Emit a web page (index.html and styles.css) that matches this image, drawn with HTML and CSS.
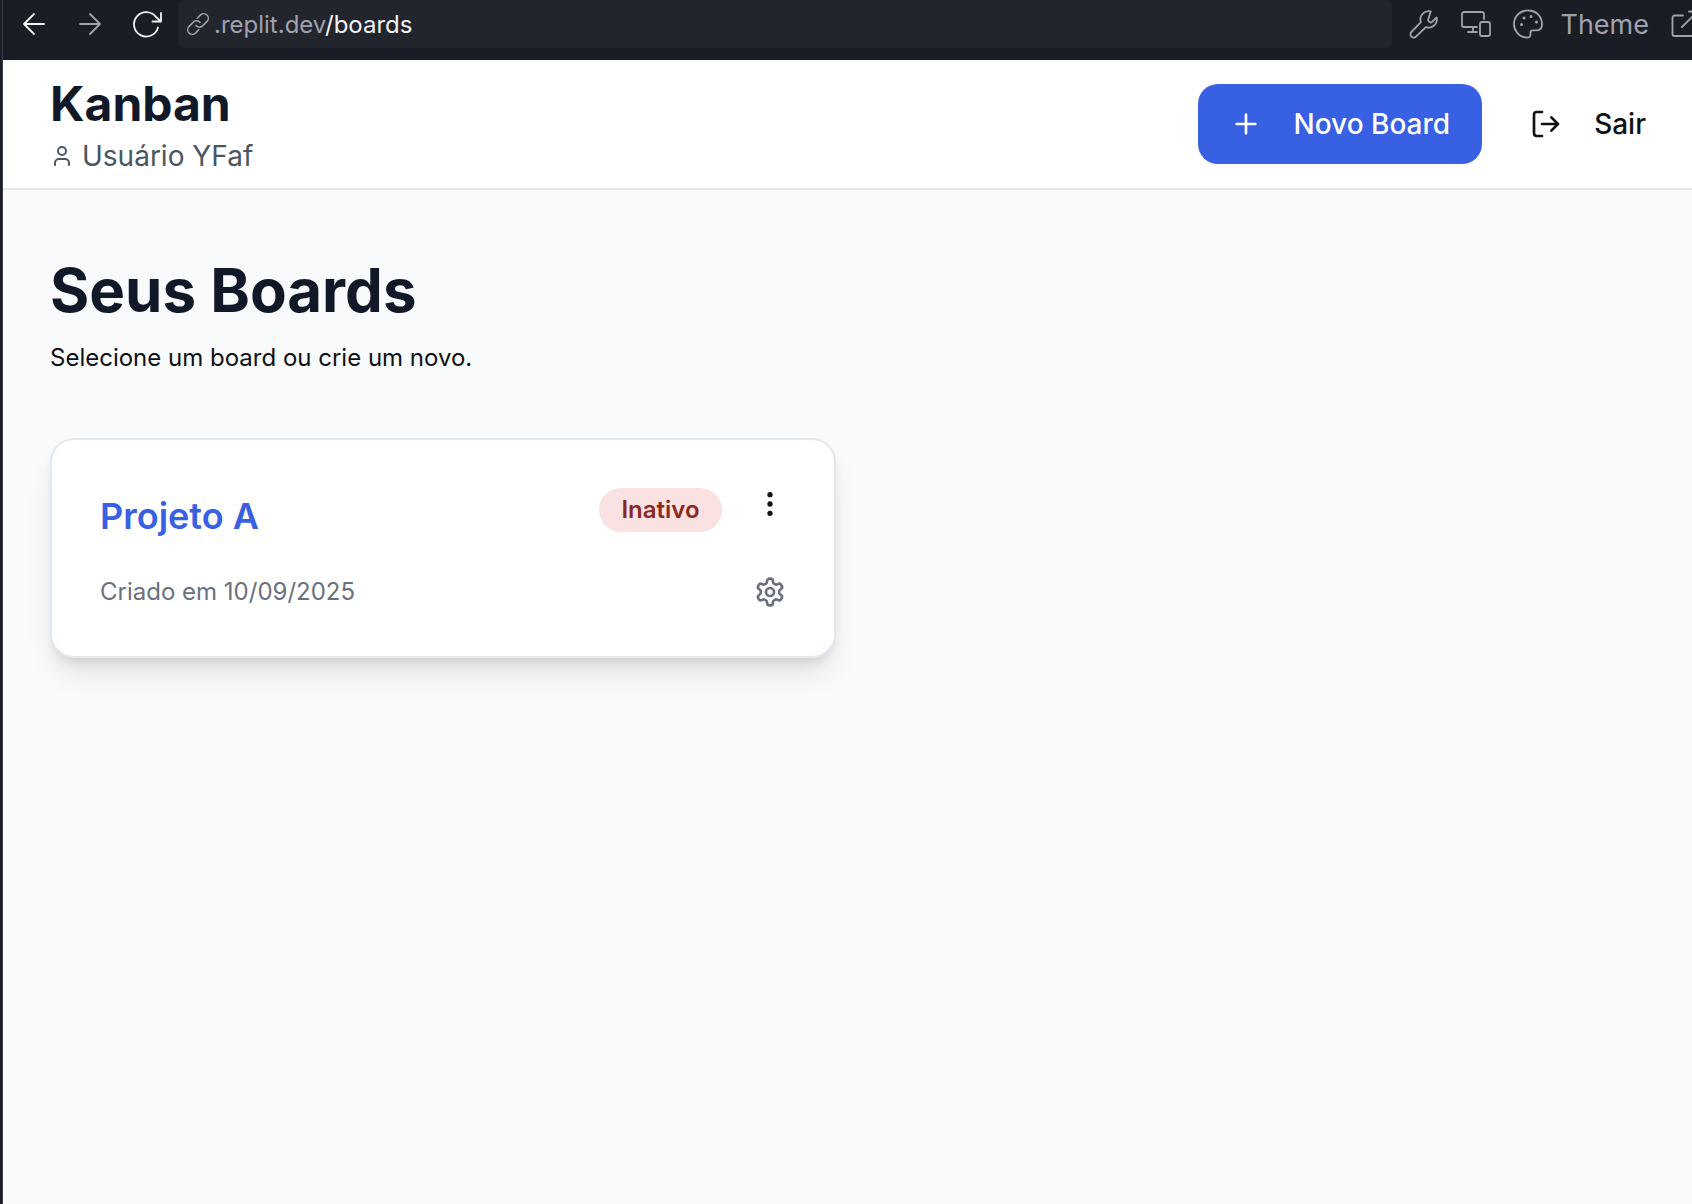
FILE: index.html
```html
<!DOCTYPE html>
<html lang="pt-BR">
<head>
<meta charset="utf-8">
<meta name="viewport" content="width=device-width, initial-scale=1">
<title>Kanban</title>
<link rel="stylesheet" href="styles.css">
</head>
<body>
<nav class="toolbar" aria-label="Preview">
  <div class="history">
    <button class="tool tool-strong" aria-label="Back"><svg class="icon" viewBox="0 0 32 32"><path d="M26 16H6M16 6L6 16l10 10"/></svg></button>
    <button class="tool" aria-label="Forward"><svg class="icon" viewBox="0 0 32 32"><path d="M6 16h20M16 6l10 10-10 10"/></svg></button>
    <button class="tool tool-strong" aria-label="Reload"><svg class="icon" viewBox="0 0 32 32"><path d="M28 19.5A12.200 12.200 0 1 1 26 9l4.500 4M31 5v8.500h-8.500"/></svg></button>
  </div>
  <button class="address">
    <svg class="icon icon-link" viewBox="0 0 24 24"><path d="M10 13.500a4.500 4.500 0 0 0 6.600.400l4.500-4.500a4.600 4.600 0 0 0-6.500-6.500l-3.400 3.400"/><path d="M14 10.500a4.500 4.500 0 0 0-6.600-.400l-4.500 4.500a4.600 4.600 0 0 0 6.500 6.500l3.400-3.400"/></svg>
    <span class="url">.replit.dev<span class="url-path">/boards</span></span>
  </button>
  <div class="tools">
    <button class="tool" aria-label="Developer tools"><svg class="icon" viewBox="0 0 32 32"><path d="M20.500 10.500c-.700.900-.600 1.700 0 2.300l1.200 1.200c.700.600 1.500.700 2.300 0l4.700-4.500a8.300 8.300 0 0 1-10.900 9.600L8 28.600a3.200 3.200 0 0 1-4.600-4.600l9.500-9.800a8.300 8.300 0 0 1 9.900-10.800z"/></svg></button>
    <button class="tool" aria-label="Devices"><svg class="icon" viewBox="0 0 32 32"><path d="M24 11V6a2 2 0 0 0-2-2H4a2 2 0 0 0-2 2v11a2 2 0 0 0 2 2h13M13 19v5M8 24h9"/><rect x="20" y="14" width="10" height="14" rx="2"/></svg></button>
    <button class="tool tool-theme"><svg class="icon" viewBox="0 0 32 32"><path d="M16.500 2.500a13.500 13.500 0 0 0-2 27c2.500.300 4-.800 4-3v-2c0-1.500.800-2.200 2.200-2.200H25c3 0 5-2.300 5-6C30 8.300 24 2.500 16.500 2.500z"/><path class="dots" d="M9.500 16.500h.01M12 10h.01M19 8.500h.01M24.500 14h.01"/></svg>Theme</button>
    <button class="tool tool-edge" aria-label="Open in new tab"><svg class="icon" viewBox="0 0 32 32"><path d="M14 7.500H5.500a2 2 0 0 0-2 2V26a2 2 0 0 0 2 2H22a2 2 0 0 0 2-2v-8M13 19L28.500 3.500M20 3.500h8.500V12"/></svg></button>
  </div>
</nav>
<div class="app">
  <header class="header">
    <div>
      <h1 class="brand">Kanban</h1>
      <p class="user"><svg class="icon icon-bold icon-small" viewBox="0 0 24 24"><path d="M19 21v-2a4 4 0 0 0-4-4H9a4 4 0 0 0-4 4v2"/><circle cx="12" cy="7" r="4"/></svg>Usuário YFaf</p>
    </div>
    <div class="actions">
      <button class="button button-primary"><svg class="icon icon-bold" viewBox="0 0 24 24"><path d="M5 12h14M12 5v14"/></svg>Novo Board</button>
      <button class="button"><svg class="icon icon-bold" viewBox="0 0 24 24"><path d="M9 21H5a2 2 0 0 1-2-2V5a2 2 0 0 1 2-2h4M16 17l5-5-5-5M21 12H9"/></svg>Sair</button>
    </div>
  </header>
  <main class="main">
    <h2 class="heading">Seus Boards</h2>
    <p class="lead">Selecione um board ou crie um novo.</p>
    <div class="boards">
      <article class="card">
        <div class="card-top">
          <h3 class="card-title"><a class="card-link" href="#projeto-a">Projeto A</a></h3>
          <div class="card-side">
            <span class="badge">Inativo</span>
            <button class="icon-button" aria-label="Mais opções"><svg class="icon icon-bold icon-filled" viewBox="0 0 24 24"><circle cx="12" cy="12" r="1"/><circle cx="12" cy="5" r="1"/><circle cx="12" cy="19" r="1"/></svg></button>
          </div>
        </div>
        <div class="card-bottom">
          <p class="card-date">Criado em 10/09/2025</p>
          <button class="icon-button icon-muted" aria-label="Configurações"><svg class="icon icon-bold" viewBox="0 0 24 24"><path d="M12.220 2h-.440a2 2 0 0 0-2 2v.180a2 2 0 0 1-1 1.730l-.430.250a2 2 0 0 1-2 0l-.150-.080a2 2 0 0 0-2.730.730l-.220.380a2 2 0 0 0 .730 2.730l.150.100a2 2 0 0 1 1 1.720v.510a2 2 0 0 1-1 1.740l-.150.090a2 2 0 0 0-.730 2.730l.220.380a2 2 0 0 0 2.730.730l.150-.080a2 2 0 0 1 2 0l.430.250a2 2 0 0 1 1 1.730V20a2 2 0 0 0 2 2h.440a2 2 0 0 0 2-2v-.180a2 2 0 0 1 1-1.730l.430-.250a2 2 0 0 1 2 0l.150.080a2 2 0 0 0 2.730-.730l.220-.390a2 2 0 0 0-.730-2.730l-.150-.080a2 2 0 0 1-1-1.740v-.500a2 2 0 0 1 1-1.740l.150-.090a2 2 0 0 0 .730-2.730l-.220-.380a2 2 0 0 0-2.730-.730l-.150.080a2 2 0 0 1-2 0l-.430-.250a2 2 0 0 1-1-1.730V4a2 2 0 0 0-2-2z"/><circle cx="12" cy="12" r="3"/></svg></button>
        </div>
      </article>
    </div>
  </main>
</div>
</body>
</html>
```
FILE: styles.css
```css
* {
  box-sizing: border-box;
}

body {
  margin: 0;
  min-height: 100vh;
  display: flex;
  flex-direction: column;
  background: #1a1d25;
  color: #0f1115;
  font-family: Inter, "Liberation Sans", sans-serif;
}

h1, h2, h3, p {
  margin: 0;
}

button {
  margin: 0;
  padding: 0;
  border: 0;
  background: none;
  color: inherit;
  font: inherit;
  cursor: pointer;
}

.icon {
  display: block;
  flex: none;
  width: 32px;
  height: 32px;
  fill: none;
  stroke: currentColor;
  stroke-width: 1.8;
  stroke-linecap: round;
  stroke-linejoin: round;
}

.icon-bold {
  stroke-width: 2;
}

.icon-small {
  width: 24px;
  height: 24px;
}

.icon-filled {
  fill: currentColor;
}

.toolbar {
  display: flex;
  align-items: flex-start;
  gap: 16px;
  height: 60px;
  padding-left: 15px;
  border-left: 1px solid #3a3d47;
  margin-left: 2px;
  overflow: hidden;
  color: #a0a3ae;
}

.history,
.tools {
  display: flex;
  align-items: center;
  height: 48px;
}

.history {
  gap: 24px;
}

.tools {
  flex: none;
  gap: 20px;
}

.tool {
  display: flex;
  align-items: center;
}

.tool-strong {
  color: #f2f3f5;
}

.tool-theme {
  gap: 16px;
  font-size: 27px;
}

.tool-edge {
  width: 23px;
  overflow: hidden;
}

.address {
  display: flex;
  flex: 1;
  align-items: center;
  gap: 4px;
  height: 48px;
  padding: 0 8px;
  border-radius: 8px;
  background: #22252e;
  font-size: 24px;
  text-align: left;
}

.icon-link {
  width: 24px;
  height: 24px;
  stroke-width: 1.5;
}

.url-path {
  color: #f2f3f5;
}

.dots {
  stroke-width: 3;
}

.app {
  flex: 1;
  border-left: 1px solid #3a3d47;
  margin-left: 2px;
  background: #f9fafc;
}

.header {
  display: flex;
  align-items: center;
  justify-content: space-between;
  padding: 12px 14px 12px 47px;
  border-bottom: 2px solid #e4e6ea;
  background: #ffffff;
}

.brand {
  color: #111827;
  font-size: 48px;
  font-weight: 700;
  line-height: 64px;
}

.user {
  display: flex;
  align-items: center;
  gap: 8px;
  color: #4b5563;
  font-size: 28px;
  line-height: 40px;
}

.actions {
  display: flex;
  gap: 16px;
}

.button {
  display: flex;
  align-items: center;
  gap: 32px;
  height: 80px;
  padding: 0 32px;
  border-radius: 20px;
  font-size: 28px;
  font-weight: 500;
}

.button-primary {
  background: #3860e2;
  color: #ffffff;
}

.main {
  padding: 64px 23px 64px 47px;
}

.heading {
  color: #111827;
  font-size: 60px;
  font-weight: 700;
  line-height: 72px;
}

.lead {
  margin-top: 16px;
  font-size: 24px;
  line-height: 32px;
}

.boards {
  display: grid;
  grid-template-columns: repeat(2, minmax(0, 1fr));
  gap: 48px;
  margin-top: 64px;
}

.card {
  padding: 48px;
  border: 2px solid #e1e8ee;
  border-radius: 24px;
  background: #ffffff;
  box-shadow: 0 20px 30px -6px rgb(0 0 0 / 10%), 0 8px 12px -4px rgb(0 0 0 / 10%);
}

.card-top,
.card-bottom,
.card-side {
  display: flex;
  justify-content: space-between;
}

.card-top,
.card-side {
  align-items: flex-start;
}

.card-bottom {
  align-items: center;
  margin-top: 32px;
}

.card-side {
  gap: 32px;
}

.card-title {
  font-size: 36px;
  font-weight: 600;
  line-height: 56px;
}

.card-link {
  color: #3860e2;
  text-decoration: none;
}

.badge {
  padding: 6px 22px;
  border-radius: 22px;
  background: #fae1e2;
  color: #8a2822;
  font-size: 24px;
  font-weight: 600;
  line-height: 32px;
}

.card-date {
  color: #6b7080;
  font-size: 24px;
  line-height: 32px;
}

.icon-muted {
  color: #6b7080;
}
```
